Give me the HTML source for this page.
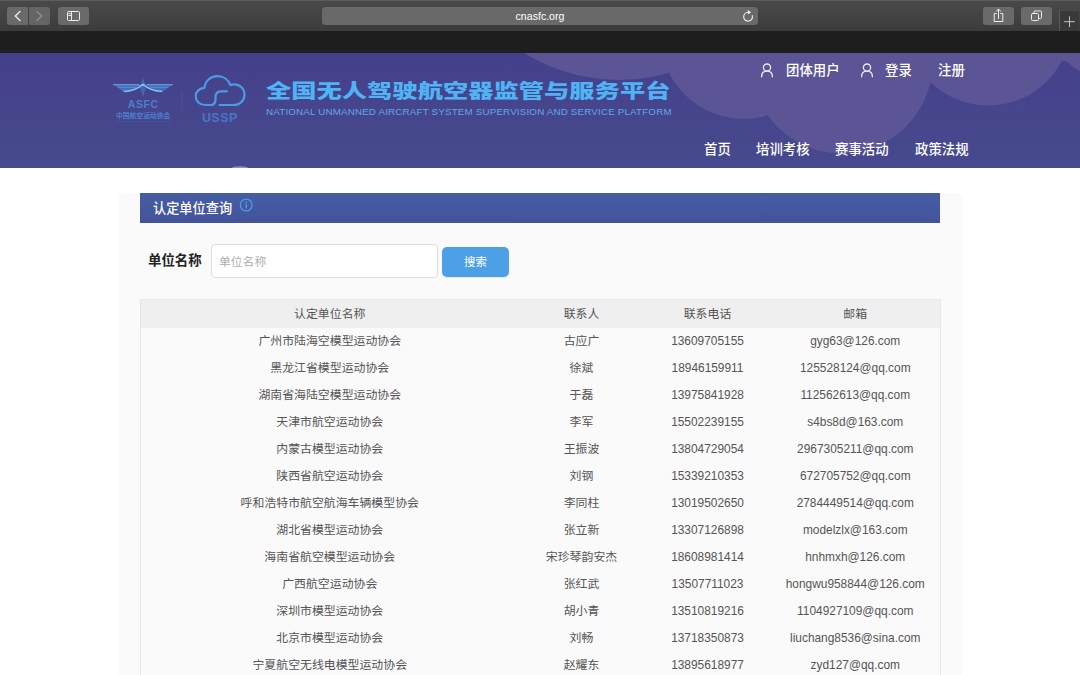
<!DOCTYPE html>
<html lang="zh-CN">
<head>
<meta charset="utf-8">
<title>全国无人驾驶航空器监管与服务平台</title>
<style>
*{box-sizing:border-box;margin:0;padding:0}
html,body{width:1080px;height:675px;overflow:hidden;background:#fff}
body{position:relative;font-family:"Liberation Sans","Noto Sans CJK SC",sans-serif;color:#555;-webkit-font-smoothing:antialiased}
.abs{position:absolute}
/* browser chrome */
#chrome{left:0;top:0;width:1080px;height:31px;background:linear-gradient(#494949 0,#444 40%,#3b3b3b 100%);border-top:1px solid #5c5c5c}
#black{left:0;top:31px;width:1080px;height:22px;background:#1e1e1e}
.tb{position:absolute;top:7px;height:18px;background:#6a6a6a;border-radius:3px}
#url{left:322px;width:436px;background:#696969;border-radius:3.5px;color:#fff;font-size:10.6px;line-height:19.5px;text-align:center}
#plus{left:1059px;top:10px;width:20px;height:21px;background:#393939;border-left:1px solid #5a5a5a;border-top:1px solid #4a4a4a}
/* banner */
#banner{left:0;top:53px;width:1080px;height:115px;background:linear-gradient(#45408b,#464a8e)}
#title{left:266px;top:77.4px;font-size:19.3px;line-height:30px;font-weight:900;color:#4fb3f4;white-space:nowrap;transform:scaleX(1.311);transform-origin:0 0}
#sub{left:266px;top:106px;font-size:9.8px;line-height:12px;color:#5fa8e6;white-space:nowrap;letter-spacing:.17px}
.nav{position:absolute;color:#fff;font-weight:500;font-size:13.4px;line-height:20px;white-space:nowrap}
/* panel */
#panel{left:118.5px;top:192.500px;width:843.5px;height:500px;background:#fafafa;border-radius:6px;box-shadow:0 0 2px 0 #fafafa}
#phead{left:140px;top:193px;width:800px;height:30px;background:linear-gradient(#465da4,#43539a);color:#fff;font-size:13.2px;font-weight:500;line-height:32px;padding-left:13px}
#lbl{left:148px;top:250px;font-size:13.4px;line-height:22px;font-weight:700;color:#222}
#inp{left:211px;top:244px;width:227px;height:34px;background:#fff;border:1px solid #dedede;border-radius:4px;color:#adadad;font-size:11.8px;line-height:34px;padding-left:7px}
#btn{left:442px;top:247px;width:67px;height:30px;background:#4d9fe6;border-radius:5px;box-shadow:0 1px 1px rgba(0,0,0,.08);color:#fff;font-size:11.4px;line-height:30px;text-align:center}
table{position:absolute;left:140px;top:299px;width:800px;border-collapse:collapse;table-layout:fixed;font-size:11.9px;color:#555;background:#fafafa;border-left:1px solid #e6e6e6;border-right:1px solid #e6e6e6;border-top:1px solid #e9e9e9}
th{height:28px;padding-bottom:2px;background:#efefef;font-weight:400;text-align:center;color:#555}
td{height:27px;padding-bottom:3px;text-align:center;white-space:nowrap}
td:nth-child(n+3){padding-bottom:1px}
</style>
</head>
<body>
<div id="chrome" class="abs"></div>
<div id="black" class="abs"></div>
<div class="tb" style="left:7px;width:21px;border-radius:3px 1px 1px 3px"></div>
<div class="tb" style="left:29px;width:21px;border-radius:1px 3px 3px 1px;background:#656565"></div>
<div class="tb" style="left:58px;width:31px"></div>
<div id="url" class="tb">cnasfc.org</div>
<div class="tb" style="left:983px;width:31px"></div>
<div class="tb" style="left:1021px;width:31px"></div>
<div id="plus" class="abs"></div>
<svg class="abs" style="left:0;top:0" width="1080" height="53" viewBox="0 0 1080 53" fill="none" stroke="#ececec" stroke-width="1" stroke-linecap="round" stroke-linejoin="round">
<path d="M20 11.5 L15.3 16 L20 20.5" stroke-width="1.4"/>
<path d="M37 11.500 L41.700 16 L37 20.500" stroke="#8c8c8c" stroke-width="1.400"/>
<rect x="67.5" y="11.5" width="12" height="9" rx="1"/><path d="M71.5 11.5V20.5M68.8 13.7h1.6M68.8 15.5h1.6"/>
<path d="M748 12.300A4.400 4.400 0 1 0 752.300 15.600" stroke-width="1.100"/><path d="M747.800 9.900L751.200 12.200L747.900 14.500Z" fill="#ececec" stroke="none"/>
<path d="M996.3 13.5h-2.1v8h8.6v-8h-2.1M998.5 18.5v-9.2M996.3 11.3l2.2-2.3 2.2 2.3" stroke-width="1"/>
<rect x="1031.5" y="13.5" width="7" height="7" rx="1" stroke-width="1"/><path d="M1034 13.3v-1.3a1 1 0 0 1 1-1h5.5a1 1 0 0 1 1 1v5.500a1 1 0 0 1-1 1h-1.600" stroke-width="1"/>
<path d="M1069.500 16.700v10M1064.500 21.700h10" stroke-width=".9" stroke="#d0d0d0"/>
</svg>

<div id="banner" class="abs"></div>
<svg class="abs" style="left:0;top:53px" width="1080" height="115" viewBox="0 53 1080 115">
<g fill="#5b5596">
<circle cx="619" cy="-100" r="180"/>
<circle cx="743.700" cy="35.300" r="83.600"/>
<circle cx="841.700" cy="62.500" r="90.900"/>
<circle cx="988.300" cy="23" r="82.600"/>
<circle cx="1112" cy="16" r="64"/>
<rect x="620" y="53" width="460" height="8"/>
</g>
<ellipse cx="240" cy="167.500" rx="8" ry="1.200" fill="#8f92c4"/>
</svg>
<svg class="abs" style="left:100px;top:60px" width="160" height="70" viewBox="100 60 160 70" fill="none" stroke-linecap="round" stroke-linejoin="round">
<path d="M143 77.600L146 87.500L143 97.200L140 87.500Z" fill="#4a7ccc" opacity=".6"/>
<path d="M113.200 84.100H172.800L161.800 92C154 91.600 147.500 88.700 143 84.600C138.500 88.700 132 91.600 124.200 92Z" fill="#4b87d3" opacity=".62" transform="translate(0 .3)"/>
<path d="M113.400 84.700H139M147 84.700H172.600" stroke="#6aaeec" stroke-width=".9"/>
<path d="M118 87.300H136M150 87.300H168" stroke="#5f9fe2" stroke-width=".6"/>
<path d="M124.400 91.400C132 91 138.500 88.300 143 84.200C147.500 88.300 154 91 161.600 91.400" stroke="#86c4f6" stroke-width="1.300"/>
<text x="143.200" y="107.600" text-anchor="middle" font-family="Liberation Sans, sans-serif" font-weight="700" font-size="10.500" letter-spacing="0.600" fill="#4a7ecb">ASFC</text>
<text x="143.200" y="118.300" text-anchor="middle" font-family="Liberation Sans, Noto Sans CJK SC, sans-serif" font-weight="700" font-size="6.800" fill="#4a7ecb">中国航空运动协会</text>
<path d="M115 121.700H171" stroke="#495aa3" stroke-width=".6"/>
<path d="M181.800 91V108" stroke="#4c589e" stroke-width=".8"/>
<path d="M212.500 105 H205.500 C199.500 105 195.700 101 195.700 96.500 C195.700 91.500 199.500 88 204.500 87.800 C205 81 210.500 76.200 217.500 76.200 C223.500 76.200 228.500 79.800 230.300 85 C231.500 84.500 232.800 84.300 234 84.300 C240 84.300 244.500 88.800 244.500 94.600 C244.500 100.400 240 105 234 105 H219.500" stroke="#4a9ce2" stroke-width="2.200"/>
<path d="M212.500 105 C214.800 104 215.500 102 215.500 99.500 V97 C215.500 93 217.500 91.300 221 91.300 H227" stroke="#4a9ce2" stroke-width="2.200"/>
<text x="219.800" y="121.500" text-anchor="middle" font-family="Liberation Sans, sans-serif" font-weight="700" font-size="12.400" letter-spacing=".5" fill="#4a76c4">USSP</text>
</svg>
<svg class="abs" style="left:755px;top:58px" width="125" height="24" viewBox="755 58 125 24" fill="none" stroke="#e9e8f4" stroke-width="1.300" stroke-linecap="round">
<circle cx="767" cy="67.600" r="3.600"/><path d="M761.600 76.800 C761.600 72.800 764 71.200 767 71.200 C770 71.200 772.400 72.800 772.400 76.800"/>
<circle cx="867" cy="67.600" r="3.600"/><path d="M861.600 76.800 C861.600 72.800 864 71.200 867 71.200 C870 71.200 872.400 72.800 872.400 76.800"/>
</svg>
<div id="title" class="abs">全国无人驾驶航空器监管与服务平台</div>
<div id="sub" class="abs">NATIONAL UNMANNED AIRCRAFT SYSTEM SUPERVISION AND SERVICE PLATFORM</div>

<div class="nav" style="left:786px;top:61.2px">团体用户</div>
<div class="nav" style="left:885px;top:61.2px">登录</div>
<div class="nav" style="left:938px;top:61.2px">注册</div>
<div class="nav" style="left:704px;top:139.5px">首页</div>
<div class="nav" style="left:756px;top:139.5px">培训考核</div>
<div class="nav" style="left:835px;top:139.5px">赛事活动</div>
<div class="nav" style="left:915px;top:139.5px">政策法规</div>

<div id="panel" class="abs"></div>
<div id="phead" class="abs">认定单位查询</div>
<svg class="abs" style="left:238px;top:197px" width="17" height="17" viewBox="0 0 17 17" fill="none">
<circle cx="8.250" cy="8" r="5.900" stroke="#4a9be2" stroke-width="1.300"/>
<circle cx="8.250" cy="5.300" r=".9" fill="#4a9be2"/><rect x="7.500" y="7" width="1.500" height="4.300" rx=".5" fill="#4a9be2"/>
</svg>
<div id="lbl" class="abs">单位名称</div>
<div id="inp" class="abs">单位名称</div>
<div id="btn" class="abs">搜索</div>

<table>
<colgroup><col style="width:378px"><col style="width:126px"><col style="width:126px"><col style="width:170px"></colgroup>
<tr><th>认定单位名称</th><th>联系人</th><th>联系电话</th><th>邮箱</th></tr>
<tr><td>广州市陆海空模型运动协会</td><td>古应广</td><td>13609705155</td><td>gyg63@126.com</td></tr>
<tr><td>黑龙江省模型运动协会</td><td>徐斌</td><td>18946159911</td><td>125528124@qq.com</td></tr>
<tr><td>湖南省海陆空模型运动协会</td><td>于磊</td><td>13975841928</td><td>112562613@qq.com</td></tr>
<tr><td>天津市航空运动协会</td><td>李军</td><td>15502239155</td><td>s4bs8d@163.com</td></tr>
<tr><td>内蒙古模型运动协会</td><td>王振波</td><td>13804729054</td><td>2967305211@qq.com</td></tr>
<tr><td>陕西省航空运动协会</td><td>刘钢</td><td>15339210353</td><td>672705752@qq.com</td></tr>
<tr><td>呼和浩特市航空航海车辆模型协会</td><td>李同柱</td><td>13019502650</td><td>2784449514@qq.com</td></tr>
<tr><td>湖北省模型运动协会</td><td>张立新</td><td>13307126898</td><td>modelzlx@163.com</td></tr>
<tr><td>海南省航空模型运动协会</td><td>宋珍琴韵安杰</td><td>18608981414</td><td>hnhmxh@126.com</td></tr>
<tr><td>广西航空运动协会</td><td>张红武</td><td>13507711023</td><td>hongwu958844@126.com</td></tr>
<tr><td>深圳市模型运动协会</td><td>胡小青</td><td>13510819216</td><td>1104927109@qq.com</td></tr>
<tr><td>北京市模型运动协会</td><td>刘畅</td><td>13718350873</td><td>liuchang8536@sina.com</td></tr>
<tr><td>宁夏航空无线电模型运动协会</td><td>赵耀东</td><td>13895618977</td><td>zyd127@qq.com</td></tr>
<tr><td>&nbsp;</td><td></td><td></td><td></td></tr>
</table>
</body>
</html>
